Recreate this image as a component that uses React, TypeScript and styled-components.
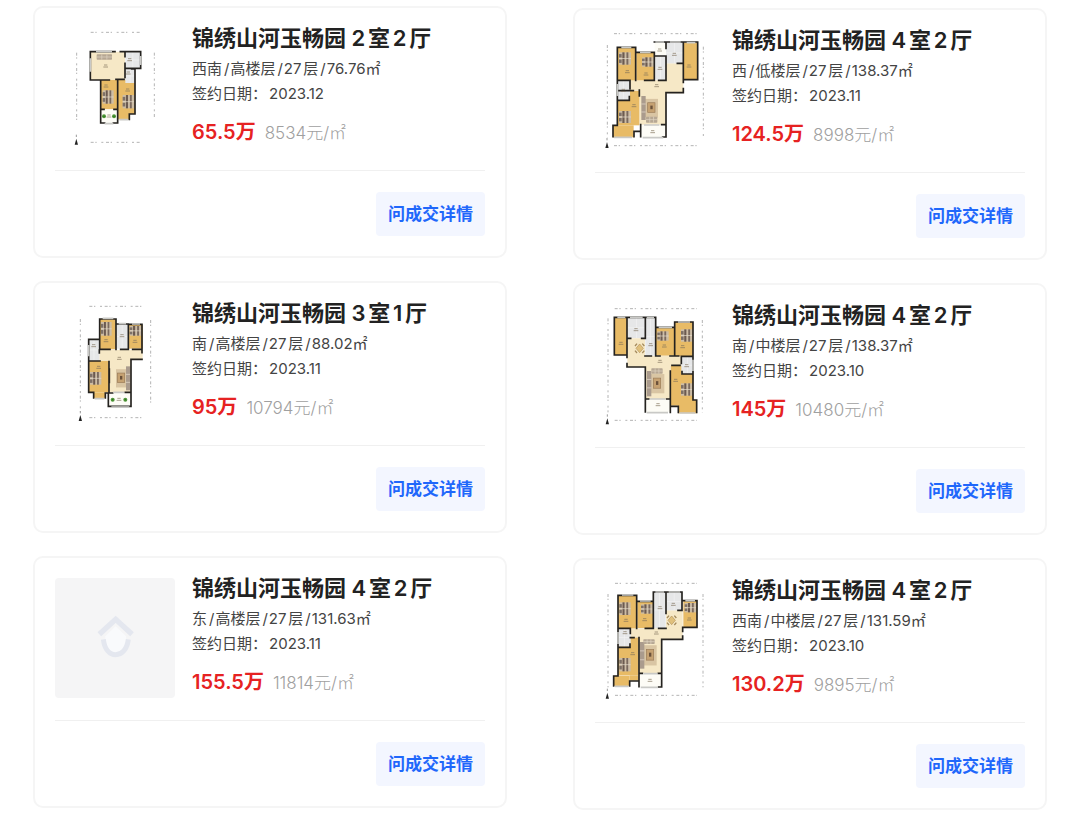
import React from "react";
import styled, { createGlobalStyle } from "styled-components";

const GlobalStyle = createGlobalStyle`
  *, *::before, *::after { box-sizing: border-box; }
  body {
    margin: 0;
    background: #fff;
    font-family: Inter, "Noto Sans CJK SC", sans-serif;
    text-autospace: normal;
  }
`;

const Page = styled.main`
  display: grid;
  grid-template-columns: repeat(2, minmax(0, 1fr));
  gap: 66px;
  padding: 6px 33px 4px;
`;

const Column = styled.ul<{ $lowered?: boolean }>`
  display: flex;
  flex-direction: column;
  gap: 23px;
  list-style: none;
  margin: 0;
  padding: ${(p) => (p.$lowered ? "2px 0 0" : "0")};
`;

const Card = styled.li`
  padding: 20px;
  border: 2px solid #f5f5f5;
  border-radius: 10px;
  background: #fff;
`;

const Summary = styled.div`
  display: flex;
  gap: 17px;
  padding-bottom: 22px;
  border-bottom: 1px solid #f0f0f0;
`;

const Thumb = styled.div<{ $empty?: boolean }>`
  flex: none;
  width: 120px;
  height: 120px;
  border-radius: 4px;
  background: ${(p) => (p.$empty ? "#f5f5f6" : "#fff")};

  svg {
    display: block;
    width: 100%;
    height: 100%;
  }
`;

const Info = styled.div`
  min-width: 0;
  white-space: nowrap;
`;

const Title = styled.h2`
  margin: 0 0 8px;
  font-size: 22px;
  line-height: 20px;
  font-weight: 600;
  color: #222;
`;

const Detail = styled.p`
  margin: 0;
  font-size: 15px;
  line-height: 25px;
  color: #444;
`;

const Slash = styled.span`
  margin: 0 1px 0 2px;
`;

const DateValue = styled.time`
  margin-left: 2px;
`;

const PriceRow = styled.p`
  display: flex;
  align-items: baseline;
  gap: 9px;
  margin: 12px 0 0;
  line-height: 28px;
  text-autospace: no-autospace;
`;

const Total = styled.strong`
  font-size: 20px;
  font-weight: 600;
  color: #e62222;
`;

const UnitPrice = styled.span`
  font-size: 17px;
  font-weight: 300;
  color: #a0a0a0;
`;

const Actions = styled.div`
  display: flex;
  justify-content: flex-end;
  padding-top: 21px;
`;

const AskButton = styled.button`
  height: 44px;
  padding: 0 12px;
  border: 0;
  border-radius: 4px;
  background: #f3f6ff;
  color: #1f67fb;
  font-family: inherit;
  font-size: 17px;
  font-weight: 600;
  line-height: 24px;
  cursor: pointer;
`;

/* ---------- floor plan drawings ---------- */

type Box = [number, number, number, number];

interface PlanData {
  top: number;
  hall: string;
  beds: Box[];
  tiles: Box[];
  balconies: Box[];
  walls: string;
  windows: string;
  bedding: Box[];
  sofa?: Box;
  sofaSide?: "left" | "right";
  dining?: [number, number];
  bench?: Box;
  plants?: [number, number][];
  labels: [number, number][];
  guides: string;
  north: [number, number];
}

const rects = (list: Box[], fill: string) =>
  list.map(([x, y, w, h], i) => <rect key={i} x={x} y={y} width={w} height={h} fill={fill} />);

const Bedding = ({ box: [x, y, w, h] }: { box: Box }) => (
  <g>
    <rect x={x} y={y} width={w} height={h} fill="#cdbda6" />
    <rect x={x + w * 0.28} y={y} width={w * 0.18} height={h} fill="#6b5a50" />
    <rect x={x + w * 0.62} y={y} width={w * 0.16} height={h} fill="#7a695e" />
    <rect x={x} y={y + h * 0.14} width={w * 0.22} height={h * 0.28} fill="#7d7067" />
    <rect x={x} y={y + h * 0.58} width={w * 0.22} height={h * 0.28} fill="#7d7067" />
    <path d={`M${x} ${y + h / 2}h${w}`} stroke="#e6dccd" strokeWidth="2" />
  </g>
);

const Sofa = ({ box: [x, y, w, h], side }: { box: Box; side: "left" | "right" }) => {
  const sx = side === "left" ? x : x + w - 13;
  const tx = side === "left" ? x + 19 : x + 4;
  return (
    <g>
      <rect x={side === "left" ? x + 8 : x} y={y + h * 0.12} width={w - 10} height={h * 0.76} fill="#d9c5a3" />
      <rect x={sx} y={y} width="13" height={h} fill="#aa9b8d" />
      <path d={`M${sx} ${y + h / 3}h13M${sx} ${y + (h * 2) / 3}h13`} stroke="#e8ded0" strokeWidth="2" />
      <rect x={tx} y={y + h * 0.28} width="22" height={h * 0.4} fill="#c6a272" stroke="#9a7b58" strokeWidth="2" />
      <rect x={tx + 8} y={y + h * 0.4} width="7" height={h * 0.15} fill="#6a513a" />
    </g>
  );
};

const Bench = ({ box: [x, y, w, h] }: { box: Box }) => (
  <g>
    <rect x={x} y={y} width={w} height={h} rx="2" fill="#b6a793" />
    <path
      d={`M${x} ${y + h / 2}h${w}M${x + w / 3} ${y}v${h}M${x + (w * 2) / 3} ${y}v${h}`}
      stroke="#e1d6c4"
      strokeWidth="2"
    />
  </g>
);

const Plan = ({ data }: { data: PlanData }) => (
  <svg viewBox={`15 ${data.top} 360 360`} role="img" aria-label="户型图">
    <path d={data.guides} fill="none" stroke="#b4b4b4" strokeWidth="3" strokeDasharray="9 5 4 14 6 8" />
    <path d={data.hall} fill="#f6e8c6" />
    {rects(data.beds, "#e8bb66")}
    {rects(data.tiles, "#e6e7e8")}
    {rects(data.balconies, "#fdfcf6")}
    {data.tiles.map(([x, y, w, h], i) => (
      <path key={i} d={`M${x + w / 2} ${y}v${h}M${x} ${y + h / 2}h${w}`} stroke="#f5f5f5" strokeWidth="2" />
    ))}
    {data.bedding.map((b, i) => (
      <Bedding key={i} box={b} />
    ))}
    {data.sofa && <Sofa box={data.sofa} side={data.sofaSide ?? "left"} />}
    {data.bench && <Bench box={data.bench} />}
    {data.dining && (
      <g transform={`translate(${data.dining[0]} ${data.dining[1]})`}>
        <path d="M-8-14-14-7M8-14l6 7M-8 14l-6-7M8 14l6-7" stroke="#a3895c" strokeWidth="4" />
        <path d="M0-13 11 0 0 13-11 0Z" fill="#e0c07c" stroke="#b3935a" strokeWidth="2" />
      </g>
    )}
    <path d={data.walls} fill="none" stroke="#24221f" strokeWidth="5" strokeLinecap="square" />
    <path d={data.windows} fill="none" stroke="#c9c9c6" strokeWidth="5" />
    {data.plants?.map(([x, y], i) => (
      <g key={i}>
        <circle cx={x} cy={y} r="6" fill="#4d9637" />
        <circle cx={x} cy={y} r="2" fill="#2c6a20" />
      </g>
    ))}
    {data.labels.map(([x, y], i) => (
      <path key={i} d={`M${x - 5} ${y - 2}h10M${x - 7} ${y + 4}h14`} stroke="#7d7059" strokeWidth="2" />
    ))}
    <path d={`M${data.north[0]} ${data.north[1]}l5 18h-10z`} fill="#222" />
    <path d={`M${data.north[0]} ${data.north[1] - 12}v7`} stroke="#999" strokeWidth="3" />
  </svg>
);

const planTwoRooms: PlanData = {
  top: 24,
  hall: "M121 95H225V145H255V190H180V180H121Z",
  beds: [[152, 180, 50, 88], [204, 180, 51, 102], [204, 282, 34, 16]],
  tiles: [[226, 97, 45, 46], [226, 147, 29, 42]],
  balconies: [[152, 268, 51, 43]],
  walls:
    "M121 95H195M211 95H272V145H226M121 95V180H178M152 180V309H164M190 309H203V268M152 268H162M192 268H203M203 180V298M225 97V110M225 130V172M245 147H255V282H238V298M198 178H222",
  windows: "M138 95H186M121 115V155M272 108V135M164 311H190M208 299H234",
  bedding: [[158, 211, 33, 40], [218, 225, 35, 40]],
  bench: [140, 103, 46, 16],
  plants: [[162, 289], [192, 289]],
  labels: [[167, 137], [168, 197], [233, 209], [239, 118], [235, 158], [177, 287]],
  guides: "M122 37H270M80 98V310M313 98V296M122 367H270",
  north: [79, 356],
};

const planFourA: PlanData = {
  top: 30,
  hall: "M120 181H228V130H280V220H228V314H148V210H120Z",
  beds: [[82, 82, 55, 99], [139, 97, 54, 84], [281, 68, 42, 111], [82, 212, 66, 104], [69, 316, 62, 36]],
  tiles: [[228, 68, 52, 62], [196, 109, 31, 70], [82, 183, 38, 58]],
  balconies: [[194, 66, 33, 40], [150, 315, 78, 38]],
  walls:
    "M82 82V316H69V350M82 82H137V181M137 97H193V181H164M82 181H120V206M82 241H118V230M193 66H323V179H280V130H262M228 68V85M194 108H228V181H206M280 68V187M280 206V218H228V351H218M228 314H215M152 314V334H132V350M148 210V228M132 334H152V350M82 212H130",
  windows: "M94 82H124M150 97H182M196 66H222M240 66H272M290 68H316M82 192V228M72 352H126M158 353H220M162 315H208",
  bedding: [[87, 97, 36, 37], [156, 112, 36, 28], [87, 273, 36, 36]],
  sofa: [154, 228, 52, 72],
  bench: [168, 290, 34, 18],
  labels: [[112, 154], [168, 161], [209, 89], [210, 144], [253, 102], [297, 137], [100, 210], [132, 256], [200, 196], [188, 334]],
  guides: "M72 41H323M52 75V352M340 80V352M72 377H323",
  north: [51, 366],
};

const planThree: PlanData = {
  top: 24,
  hall: "M148 165H278V193H243V292H178V200H148Z",
  beds: [[149, 72, 49, 91], [235, 89, 43, 72], [117, 198, 60, 94], [130, 292, 36, 18]],
  tiles: [[200, 88, 33, 73], [116, 133, 32, 64]],
  balconies: [[175, 294, 68, 41]],
  walls:
    "M149 130V72H198V163M149 72V163H180M198 87H235V163H212M235 88H276V163H248M148 133H116V292H131V309M276 163V173M276 193H243V334H175V294H188M226 292H243M116 198H150M177 200V294H166V309M148 165V174M178 222V262",
  windows: "M158 70H190M206 86H228M246 87H270M116 150V184M134 311H163M184 336H238M190 292H222",
  bedding: [[153, 81, 32, 41], [239, 93, 36, 29], [120, 231, 34, 38]],
  sofa: [198, 214, 43, 72],
  sofaSide: "right",
  plants: [[188, 314], [226, 314]],
  labels: [[168, 136], [255, 138], [216, 121], [131, 151], [146, 216], [208, 189], [207, 312]],
  guides: "M118 34H276M91 72V350M302 75V335M118 368H276",
  north: [91, 360],
};

const planFourB: PlanData = {
  top: 30,
  hall: "M112 130H165V183H274V210H241V312H166V216H112Z",
  beds: [[73, 67, 38, 113], [198, 98, 56, 84], [255, 81, 54, 102], [242, 211, 68, 121], [264, 315, 56, 40]],
  tiles: [[113, 68, 52, 61], [166, 68, 30, 114], [274, 184, 36, 53]],
  balconies: [[166, 312, 75, 40]],
  walls:
    "M111 67H73V180H111M111 67V187M111 206V216H166V351M111 67H166V130H155M166 67H197V97H254V81H309V183M111 130H122M197 97V183H210M165 183H184M240 183H254V100M254 183H266M309 183V315H320V352M309 184H274V205M309 237H276V230M241 334V228M241 334H265V352M241 334V352M166 312H176M230 312H241M246 211H270",
  windows: "M82 67H106M120 67H158M206 97H246M264 81H300M309 194V228M170 353H234M268 354H316M180 312H226M170 68H192",
  bedding: [[202, 109, 34, 28], [273, 103, 35, 37], [273, 265, 35, 37]],
  sofa: [171, 228, 54, 76],
  bench: [184, 220, 34, 16],
  dining: [149, 160],
  labels: [[93, 144], [138, 103], [182, 148], [223, 152], [278, 154], [290, 211], [257, 255], [210, 198], [204, 328]],
  guides: "M74 41H320M54 70V352M337 75V352M74 376H320",
  north: [52, 370],
};

const planFourC: PlanData = {
  top: 30,
  hall: "M122 175H228V121H278V208H215V310H147V205H122Z",
  beds: [[84, 76, 56, 99], [142, 94, 47, 80], [280, 92, 41, 79], [84, 203, 62, 113], [71, 317, 48, 31], [119, 316, 27, 16]],
  tiles: [[190, 66, 37, 108], [229, 67, 47, 54], [84, 176, 38, 54]],
  balconies: [[146, 311, 69, 40]],
  walls:
    "M84 76V318H71V348M84 76H140V175M140 94H190V175H166M84 175H121V190M84 232H120V222M190 94V66H276V121H264M228 66V130M228 175H206M276 92H321V172H278V184M278 198V208H215V351H206M147 203V310M147 310H157M205 310H215M147 310V350M119 348V333H146M121 203H132",
  windows: "M96 75H130M150 93H182M196 66H222M236 66H270M286 92H315M84 186V222M74 349H116M152 352H204M160 311H202",
  bedding: [[88, 97, 34, 38], [153, 103, 36, 28], [284, 99, 35, 28], [88, 264, 34, 40]],
  sofa: [150, 216, 52, 80],
  bench: [160, 208, 34, 14],
  dining: [245, 151],
  labels: [[108, 150], [164, 148], [210, 112], [250, 102], [298, 146], [105, 187], [128, 250], [199, 188], [180, 330]],
  guides: "M75 40H321M54 72V352M339 72V352M75 376H321",
  north: [52, 368],
};

const Placeholder = () => (
  <svg viewBox="15 27 360 360" role="img" aria-label="暂无户型图">
    <path d="M166 202 197 172l31 30v22q-6 26-31 27-25-1-31-27Z" fill="#f9fafc" />
    <path d="m148 196 49-45 49 45" fill="none" stroke="#e4e7ef" strokeWidth="16" />
    <path d="M160 211c4 31 19 46 37 46s34-15 38-46" fill="none" stroke="#e4e7ef" strokeWidth="15" />
  </svg>
);

/* ---------- listings ---------- */

interface Deal {
  rooms: string;
  facts: string[];
  date: string;
  total: string;
  unit: string;
  plan?: PlanData;
}

const leftDeals: Deal[] = [
  { rooms: "2室2厅", facts: ["西南", "高楼层", "27层", "76.76㎡"], date: "2023.12", total: "65.5万", unit: "8534元/㎡", plan: planTwoRooms },
  { rooms: "3室1厅", facts: ["南", "高楼层", "27层", "88.02㎡"], date: "2023.11", total: "95万", unit: "10794元/㎡", plan: planThree },
  { rooms: "4室2厅", facts: ["东", "高楼层", "27层", "131.63㎡"], date: "2023.11", total: "155.5万", unit: "11814元/㎡" },
];

const rightDeals: Deal[] = [
  { rooms: "4室2厅", facts: ["西", "低楼层", "27层", "138.37㎡"], date: "2023.11", total: "124.5万", unit: "8998元/㎡", plan: planFourA },
  { rooms: "4室2厅", facts: ["南", "中楼层", "27层", "138.37㎡"], date: "2023.10", total: "145万", unit: "10480元/㎡", plan: planFourB },
  { rooms: "4室2厅", facts: ["西南", "中楼层", "27层", "131.59㎡"], date: "2023.10", total: "130.2万", unit: "9895元/㎡", plan: planFourC },
];

const DealCard = ({ deal }: { deal: Deal }) => (
  <Card>
    <Summary>
      <Thumb $empty={!deal.plan}>{deal.plan ? <Plan data={deal.plan} /> : <Placeholder />}</Thumb>
      <Info>
        <Title>锦绣山河玉畅园 {deal.rooms}</Title>
        <Detail>
          {deal.facts.map((fact, i) => (
            <React.Fragment key={fact}>
              {i > 0 && <Slash>/</Slash>}
              {fact}
            </React.Fragment>
          ))}
        </Detail>
        <Detail>
          签约日期：<DateValue>{deal.date}</DateValue>
        </Detail>
        <PriceRow>
          <Total>{deal.total}</Total>
          <UnitPrice>{deal.unit}</UnitPrice>
        </PriceRow>
      </Info>
    </Summary>
    <Actions>
      <AskButton type="button">问成交详情</AskButton>
    </Actions>
  </Card>
);

export default function App() {
  return (
    <>
      <GlobalStyle />
      <Page>
        <Column>
          {leftDeals.map((deal) => (
            <DealCard key={deal.total} deal={deal} />
          ))}
        </Column>
        <Column $lowered>
          {rightDeals.map((deal) => (
            <DealCard key={deal.total} deal={deal} />
          ))}
        </Column>
      </Page>
    </>
  );
}
